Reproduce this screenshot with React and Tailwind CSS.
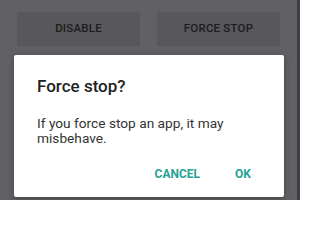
import React from "react";

export default function App() {
  return (
    <div
      className="w-[300px] h-[200px] overflow-hidden flex flex-row bg-[#616064]"
      style={{ fontFamily: "Roboto, 'Noto Sans', sans-serif" }}
    >
      <div className="w-[297px] h-full flex flex-col">
        <div className="flex flex-row gap-[17px] pl-[17px] pt-[12px]">
          <div className="w-[123px] h-[34px] bg-[#58575b] flex items-center justify-center text-[11.5px] font-medium text-[#1c1c1c] tracking-[0.2px]">
            DISABLE
          </div>
          <div className="w-[123px] h-[34px] bg-[#58575b] flex items-center justify-center text-[11.5px] font-medium text-[#1c1c1c] tracking-[0.2px]">
            FORCE STOP
          </div>
        </div>
        <div className="mt-[9px] ml-[14px] w-[270px] h-[142px] bg-white rounded-[2px] shadow-[0_2px_6px_rgba(0,0,0,0.3)] flex flex-col">
          <div className="pl-[23px] pt-[20px] text-[17px] leading-[22px] font-medium text-[#212121]">
            Force stop?
          </div>
          <div className="pl-[23px] mt-[19px] text-[13.7px] leading-[15px] text-[#333333]">
            If you force stop an app, it may
            <br />
            misbehave.
          </div>
          <div className="mt-[20px] flex flex-row justify-end gap-[35px] pr-[33px] text-[12px] leading-[16px] font-bold text-[#27a195]">
            <span>CANCEL</span>
            <span>OK</span>
          </div>
        </div>
      </div>
      <div className="w-[3px] h-full bg-[#3f3e42]" />
    </div>
  );
}
